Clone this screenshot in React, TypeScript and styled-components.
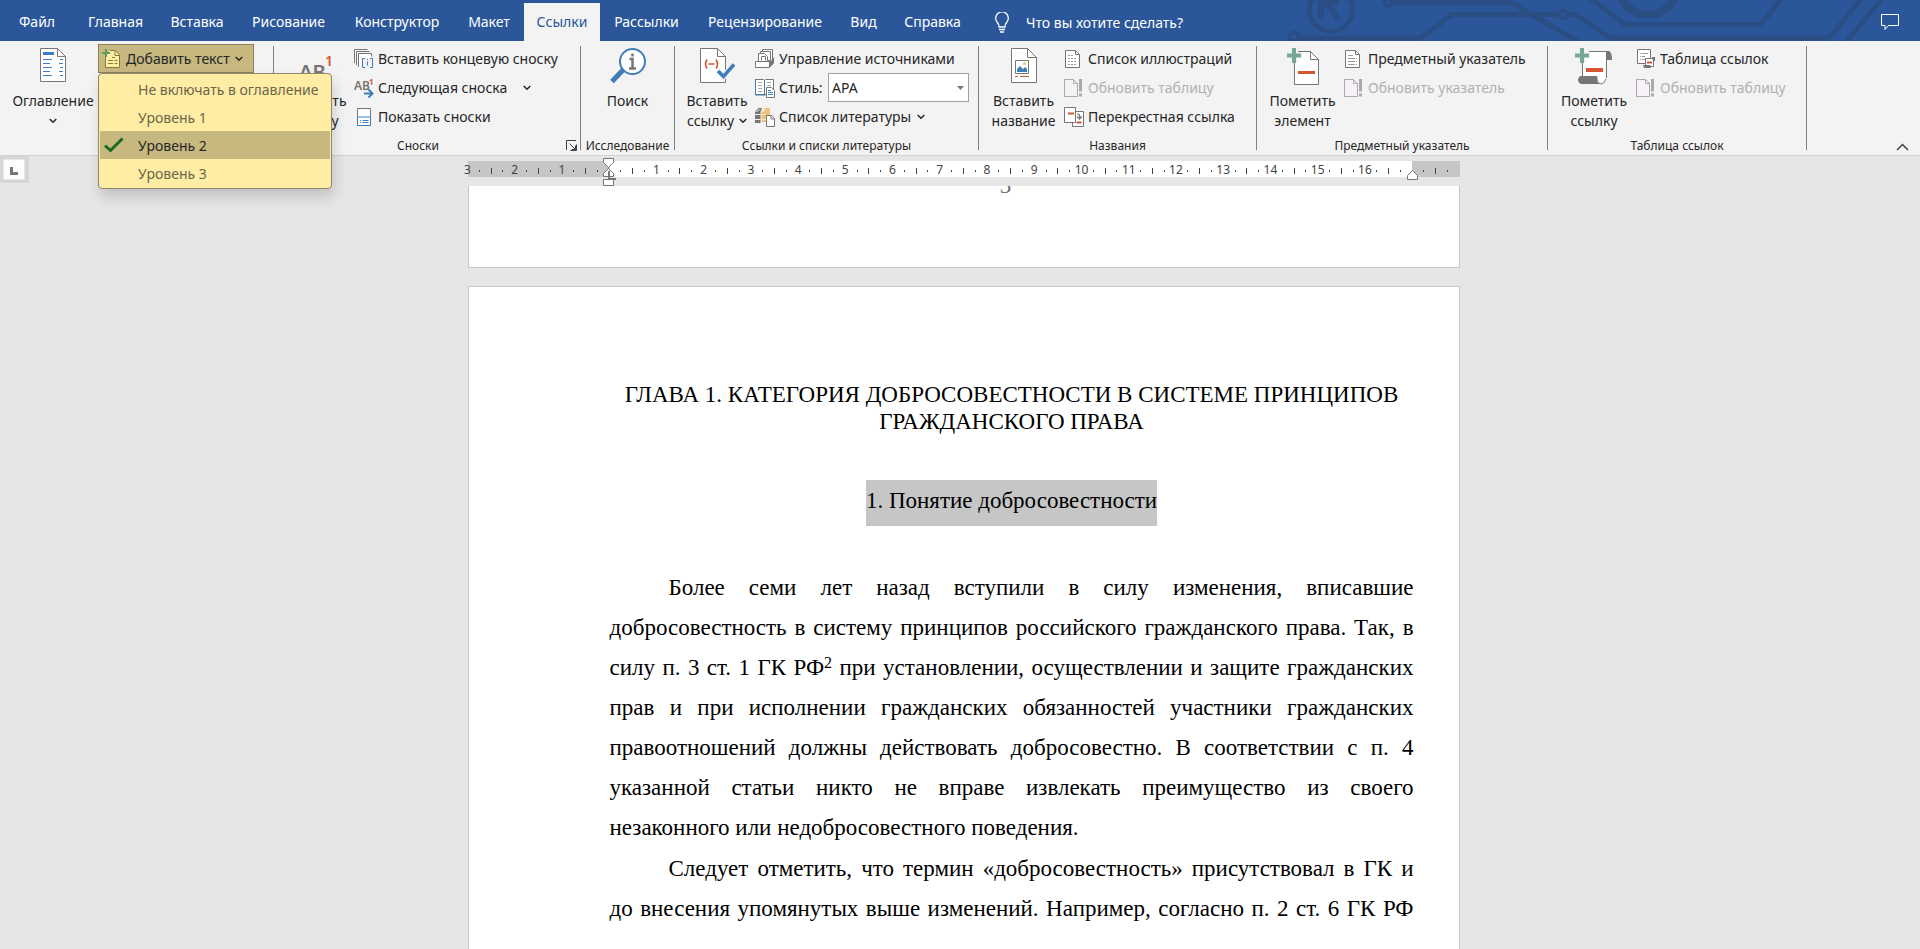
import React from 'react';
import styled, { createGlobalStyle, css } from 'styled-components';

const GlobalStyle = createGlobalStyle`
  *, *::before, *::after { box-sizing: border-box; }
  html, body { margin: 0; padding: 0; }
  body { background: #e6e6e6; color: #262626; overflow: hidden; }
  body, button, select { font-family: 'Noto Sans', 'Open Sans', sans-serif; font-size: 14px; }
  button { margin: 0; padding: 0; border: 0; background: none; color: inherit; cursor: pointer; }
  svg { display: block; flex: none; }
`;

const Window = styled.div`
  display: flex;
  flex-direction: column;
  height: 100vh;
`;

/* ---------- tab strip ---------- */

const TabStrip = styled.header`
  position: relative;
  display: flex;
  height: 41px;
  padding-top: 3px;
  background: #2b579a;
  flex: none;
`;

const Circuit = styled.svg`
  position: absolute;
  top: 0;
  right: 0;
`;

const Tabs = styled.nav`
  display: flex;
`;

const Tab = styled.button<{ $width: number; $active?: boolean }>`
  width: ${(p) => p.$width}px;
  height: 38px;
  line-height: 38px;
  white-space: nowrap;
  color: #fff;
  ${(p) => p.$active && css`
    background: #f3f3f3;
    color: #2b579a;
  `}
`;

const TellMe = styled.button`
  display: flex;
  align-items: center;
  gap: 16px;
  margin-left: 19px;
  color: #fff;
  white-space: nowrap;
`;

const CommentsButton = styled.button`
  position: relative;
  margin-left: auto;
  margin-right: 20px;
  color: #fff;
`;

/* ---------- ribbon ---------- */

const Ribbon = styled.section`
  display: flex;
  height: 115px;
  background: #f3f3f3;
  border-bottom: 1px solid #d2d2d2;
  flex: none;
`;

const Divider = styled.div`
  width: 1px;
  margin: 5px 0;
  background: #808080;
  flex: none;
`;

const Group = styled.div<{ $width: number }>`
  position: relative;
  display: flex;
  flex-direction: column;
  width: ${(p) => p.$width}px;
  padding-top: 3px;
  flex: none;
`;

const GroupBody = styled.div`
  display: flex;
  height: 87px;
`;

const GroupLabel = styled.div<{ $launcher?: boolean }>`
  display: flex;
  justify-content: center;
  height: 24px;
  padding-right: ${(p) => (p.$launcher ? 18 : 0)}px;
  line-height: 30px;
  font-size: 12px;
  white-space: nowrap;
`;

const Launcher = styled.button`
  position: absolute;
  right: 3px;
  bottom: 4px;
`;

const BigButton = styled.button<{ $width: number; $pad: number }>`
  display: flex;
  flex-direction: column;
  align-items: center;
  width: ${(p) => p.$width}px;
  padding-top: 4px;
  padding-left: ${(p) => p.$pad}px;
  line-height: 20px;
  white-space: nowrap;
  flex: none;
`;

const BigIcon = styled.span`
  display: flex;
  justify-content: center;
  height: 43px;
`;

const LabelLine = styled.span`
  display: flex;
  align-items: center;
  gap: 5px;
  height: 20px;
`;

const Rows = styled.div`
  display: flex;
  flex-direction: column;
`;

const Row = styled.button<{ $disabled?: boolean }>`
  display: flex;
  align-items: center;
  gap: 4px;
  height: 29px;
  white-space: nowrap;
  color: ${(p) => (p.$disabled ? '#b1b1b1' : '#262626')};
`;

const RowIcon = styled.span`
  display: flex;
  width: 20px;
  flex: none;
`;

const RowArrow = styled.span<{ $gap: number }>`
  margin-left: ${(p) => p.$gap}px;
`;

const StyleRow = styled.div`
  display: flex;
  align-items: center;
  gap: 4px;
  height: 29px;
`;

const StyleLabel = styled.label`
  width: 45px;
`;

const SelectBox = styled.div`
  display: grid;
  width: 141px;
  align-items: center;
  & > * { grid-area: 1 / 1; }
  & > svg { justify-self: end; margin-right: 5px; pointer-events: none; }
`;

const StyleSelect = styled.select`
  appearance: none;
  width: 100%;
  height: 29px;
  padding: 0 3px;
  border: 1px solid #a0a0a0;
  border-radius: 0;
  background: #fff;
  color: #262626;
`;

const AddText = styled.div`
  position: relative;
  width: 156px;
  height: 29px;
`;

const AddTextButton = styled.button`
  display: flex;
  align-items: center;
  gap: 5px;
  width: 100%;
  height: 29px;
  padding-left: 3px;
  border: 1px solid #8a8058;
  background: #c6b87f;
  white-space: nowrap;
`;

const Menu = styled.ul`
  position: absolute;
  z-index: 5;
  top: 29px;
  left: 0;
  width: 234px;
  margin: 0;
  padding: 1px;
  list-style: none;
  background: #ffeda3;
  border: 1px solid #8e8868;
  border-radius: 4px;
  box-shadow: 2px 8px 14px rgba(0, 0, 0, 0.16);
`;

const MenuItem = styled.button<{ $checked?: boolean }>`
  display: grid;
  grid-template-columns: 38px 1fr;
  align-items: center;
  width: 100%;
  height: 28px;
  text-align: left;
  white-space: nowrap;
  color: ${(p) => (p.$checked ? '#262626' : '#6b654c')};
  background: ${(p) => (p.$checked ? '#c6b87f' : 'transparent')};
`;

const CheckCell = styled.span`
  padding-left: 4px;
`;

const Collapse = styled.button`
  align-self: flex-end;
  margin: 0 11px 4px auto;
`;

/* ---------- document area ---------- */

const Workspace = styled.main`
  display: flex;
  flex: 1;
  min-height: 0;
  padding-right: 22px;
`;

const Corner = styled.div`
  width: 29px;
  height: 27px;
  padding: 3px;
  background: #d6d6d6;
  flex: none;
`;

const TabKind = styled.button`
  display: flex;
  align-items: flex-end;
  justify-content: center;
  width: 22px;
  height: 21px;
  padding-bottom: 4px;
  background: #fdfdfd;
  border: 1px solid #e6e6e6;
`;

const Canvas = styled.div`
  display: flex;
  flex-direction: column;
  align-items: center;
  flex: 1;
  min-width: 0;
`;

const Ruler = styled.div`
  position: relative;
  width: 992px;
  height: 16px;
  margin: 5px 0 9px;
  background: linear-gradient(to right, #c6c6c6 142px, #fff 142px, #fff 944px, #c6c6c6 944px);
  flex: none;
`;

const Marks = styled.div`
  display: grid;
  grid-template-columns: repeat(84, minmax(0, 1fr));
  margin: 0 6px 0 -6px;
  height: 16px;
  font-size: 12px;
  line-height: 18px;
  color: #444;
`;

const Mark = styled.span<{ $tall?: boolean; $dot?: boolean }>`
  display: flex;
  justify-content: center;
  align-items: center;
  ${(p) => (p.$tall || p.$dot) && css`
    &::before {
      content: '';
      width: 1px;
      height: ${p.$tall ? 6 : 2}px;
      margin-top: 2px;
      background: #444;
    }
  `}
`;

const IndentMarker = styled.svg<{ $left: number; $top: number }>`
  position: absolute;
  left: ${(p) => p.$left}px;
  top: ${(p) => p.$top}px;
`;

const Pages = styled.div`
  display: flex;
  flex-direction: column;
  gap: 18px;
  flex: 1;
  min-height: 0;
  overflow: hidden;
`;

const Sheet = styled.article`
  width: 992px;
  min-height: 1403px;
  background: #fff;
  border: 1px solid #c6c6c6;
  padding: 94px 45px 94px 141px;
  flex: none;
`;

const SheetEnd = styled(Sheet)`
  display: flex;
  flex-direction: column;
  justify-content: flex-end;
  height: 82px;
  min-height: 0;
  padding: 0 57px 68px 141px;
  border-top: 0;
  overflow: hidden;
`;

const Serif = css`
  margin: 0;
  font-family: 'Liberation Serif', 'Times New Roman', serif;
  font-size: 23px;
  font-weight: 400;
  color: #000;
`;

const PageNumber = styled.p`
  ${Serif}
  flex: none;
  line-height: 26px;
  text-align: center;
  color: #707070;
`;

const Chapter = styled.h1`
  ${Serif}
  line-height: 27px;
  text-align: center;
`;

const Section = styled.h2`
  ${Serif}
  width: fit-content;
  margin: 45px auto 42px;
  padding-bottom: 4px;
  line-height: 42px;
  background: #c6c6c6;
`;

const Paragraph = styled.p<{ $continues?: boolean }>`
  ${Serif}
  line-height: 40px;
  text-align: justify;
  text-indent: 59px;
  & + & { margin-top: 1px; }
  ${(p) => p.$continues && 'text-align-last: justify;'}
`;

const NoteRef = styled.sup`
  font-size: 16px;
  line-height: 0;
  vertical-align: 7px;
`;

/* ---------- drawings ---------- */

const GREY = '#767676';
const BLUE = '#3f7cba';
const RED = '#d65532';
const GREEN = '#74a892';

const Chevron = () => (
  <svg width="8" height="6" viewBox="0 0 8 6" fill="none" stroke="#262626" strokeWidth="1.5">
    <path d="M.7 1 4 4.3 7.3 1" />
  </svg>
);

const TocIcon = () => (
  <svg width="26" height="34" viewBox="0 0 26 34" fill="none">
    <path d="M.5.5h17l8 8v25H.5z" fill="#fff" stroke={GREY} />
    <path d="M17.5.5v8h8" stroke={GREY} />
    <path d="M3 4h11v3H3z" fill={BLUE} />
    <path d="M3 11.5h9M3 15.500h7M3 19.500h9M3 23.500h7M3 27.500h9M20 11.500h3M19 15.500h4M20 19.500h3M19 23.500h4M20 27.500h3" stroke={BLUE} />
  </svg>
);

const AddTextIcon = () => (
  <svg width="19" height="20" viewBox="0 0 19 20" fill="none">
    <path d="M3.500 5V18.500h14V6l-4-4.500H8" fill="#ffeda3" stroke="#8a7a3a" />
    <path d="M13 1.500V6.500h5" stroke="#8a7a3a" />
    <path d="M10 8.500h3M6 11.500h5M12.500 11.500h3M6 14.500h5M12.500 14.500h3" stroke="#8a7a3a" />
    <path d="M4 0v8M0 4h8" stroke="#5f9b62" strokeWidth="2" />
  </svg>
);

const CheckIcon = () => (
  <svg width="20" height="16" viewBox="0 0 20 16" fill="none" stroke="#1c6b24" strokeWidth="3">
    <path d="M1 8.500 6.500 13.500 18.500 1.500" />
  </svg>
);

const FootnoteIcon = () => (
  <svg width="34" height="34" viewBox="0 0 34 34">
    <text x="0" y="31" fontFamily="Noto Sans" fontWeight="600" fontSize="20" fill={GREY}>AB</text>
    <text x="26" y="18" fontFamily="Noto Sans" fontWeight="600" fontSize="14" fill={RED}>1</text>
  </svg>
);

const EndnoteIcon = () => (
  <svg width="20" height="20" viewBox="0 0 20 20" fill="none" stroke={GREY}>
    <path d="M.500 14V.500h13M2.500 16V2.500h13M4.500 18V4.500h13v3" />
    <path d="M5 5h12v4H7v9H5z" fill="#fff" stroke="none" />
    <path d="M11 9.500H8.500v9H11M16 9.500h2.500v9H16M13.500 12.500v4M13.500 10v1" stroke={BLUE} />
  </svg>
);

const NextNoteIcon = () => (
  <svg width="20" height="20" viewBox="0 0 20 20" fill="none">
    <text x="0" y="12" fontFamily="Noto Sans" fontWeight="600" fontSize="12" fill={GREY}>AB</text>
    <text x="15" y="7" fontFamily="Noto Sans" fontWeight="700" fontSize="8" fill={RED}>1</text>
    <path d="M10 15.500h8M14.500 11.500l4 4-4 4" stroke={BLUE} strokeWidth="2" />
  </svg>
);

const ShowNotesIcon = () => (
  <svg width="20" height="18" viewBox="0 0 20 18" fill="none">
    <path d="M3.500.500h13v17h-13z" fill="#fff" stroke={GREY} />
    <path d="M3.500 9V17.500h13V9zM6 12.500h1M8.500 12.500h6M6 14.500h1M8.500 14.500h6" stroke={BLUE} />
  </svg>
);

const SearchIcon = () => (
  <svg width="36" height="36" viewBox="0 0 36 36" fill="none">
    <path d="M13 22 2 33.500" stroke={BLUE} strokeWidth="5" />
    <circle cx="22.500" cy="13.500" r="12.500" fill="#fff" stroke={BLUE} strokeWidth="2" />
    <path d="M22.500 5.500v3M19.500 11h3v9.500M19 20.500h7" stroke={GREY} strokeWidth="2.500" />
  </svg>
);

const CitationIcon = () => (
  <svg width="35" height="35" viewBox="0 0 35 35" fill="none">
    <path d="M.500.500h17l8 8v26H.500z" fill="#fff" stroke={GREY} />
    <path d="M17.500.500v8h8" stroke={GREY} />
    <path d="M7 11.500q-3 5 0 9M16 11.500q3 5 0 9M8.500 16h6" stroke={RED} strokeWidth="1.600" />
    <path d="M18 23l5.500 5.500L34 16.500" stroke="#f3f3f3" strokeWidth="6" />
    <path d="M18 23l5.500 5.500L34 16.500" stroke={BLUE} strokeWidth="3.500" />
  </svg>
);

const SourcesIcon = () => (
  <svg width="20" height="19" viewBox="0 0 20 19" fill="none" stroke={GREY}>
    <path d="M7.500 2V.500h10v12H15M5.500 4V2.500h10v9h-3" fill="#fff" />
    <path d="M3.500 12V4.500h6l3 3V12" fill="#fff" />
    <path d="M6.500 11.500v-4h4v4" />
    <path d="M.500 12.500h14v6H.500z" fill="#fff" />
    <path d="M15 13l4-5v6l-4 4.500z" fill={GREY} stroke="none" />
  </svg>
);

const StyleIcon = () => (
  <svg width="20" height="20" viewBox="0 0 20 20" fill="none">
    <path d="M.500 1.500h8l1 1 1-1h8v15H.500z" fill="#fff" stroke={GREY} />
    <path d="M.500 1v16h10M9.500 2v14" stroke={BLUE} />
    <path d="M3 4.500h4M3 7.500h4M3 10.500h4M3 13.500h4M12 4.500h4M12 7.500h4" stroke="#a5a5a5" />
    <path d="M11.500 9.500h5l3 3v7h-8z" fill="#fff" stroke={GREY} />
    <path d="M13 12.500h3M13 14.500h5M13 16.500h5" stroke={BLUE} />
  </svg>
);

const BooksIcon = () => (
  <svg width="20" height="20" viewBox="0 0 20 20" fill="none">
    <path d="M0 5 3.500 1H7L5.500 5v11H0z" fill={GREY} />
    <path d="M1.500 5 4.500 2" stroke="#fff" />
    <path d="M0 7.500h5.500M0 12.500h5.500" stroke="#f3f3f3" />
    <path d="M6.500 5 10 1h5v14H6.500z" fill="#eac27a" />
    <path d="M8 5l3-3" stroke="#fff" />
    <path d="M6.500 7.500h4.500M6.500 12.500h4.500" stroke="#f9e6c2" />
    <path d="M11.500 8.500h5l3 3v8h-8z" fill="#fff" stroke={GREY} />
    <path d="M16 8.500v3.500h3.500" stroke={GREY} />
  </svg>
);

const CaptionIcon = () => (
  <svg width="26" height="35" viewBox="0 0 26 35" fill="none">
    <path d="M.500.500h16l9 9v25H.500z" fill="#fff" stroke={GREY} />
    <path d="M16.500.500v9h9" stroke={GREY} />
    <path d="M4.500 12.500h13v13h-13z" stroke={GREY} />
    <path d="M6 24v-3l3-3 3 3 2-2 2 2v3z" fill={BLUE} />
    <circle cx="13.500" cy="15.500" r="1.500" fill="#eac27a" />
    <path d="M4 28.500h3M9 28.500h9" stroke={RED} />
  </svg>
);

const ListIcon = ({ dashed }: { dashed?: boolean }) => (
  <svg width="18" height="18" viewBox="0 0 18 18" fill="none">
    <path d="M1.500.500h10l4 4v13h-14z" fill="#fff" stroke={GREY} />
    <path d="M11.500.500v4h4" stroke={GREY} />
    <path
      d="M4 5.500h5M4 8.500h9M4 11.500h9M4 14.500h9"
      stroke="#9a9a9a"
      strokeDasharray={dashed ? '2 1' : '7 1'}
    />
  </svg>
);

const UpdateIcon = () => (
  <svg width="20" height="18" viewBox="0 0 20 18" fill="none">
    <path d="M.500.500h9l4 4v13H.500z" fill="#f7f2f8" stroke="#aaa" />
    <path d="M9.500.500v4h4" stroke="#aaa" />
    <path d="M16.500 0v12.500M16.500 14.500v3" stroke="#aaa" strokeWidth="3" />
  </svg>
);

const CrossRefIcon = () => (
  <svg width="20" height="20" viewBox="0 0 20 20" fill="none">
    <path d="M8.500 4.500h11v15h-11z" fill="#fff" stroke={GREY} />
    <path d="M.500.500h11v15H.500z" fill="#fff" stroke={GREY} />
    <path d="M4 6.500h6M12.500 15.500h5" stroke={RED} strokeWidth="2" />
    <path d="M13.500 7q3 0 2 5M13 9.500l2.500 2.500 2.500-2.500" stroke={GREY} strokeWidth="1.300" />
  </svg>
);

const MarkEntryIcon = () => (
  <svg width="32" height="38" viewBox="0 0 32 38" fill="none">
    <path d="M7.500 3.500h16l8 8v25h-24z" fill="#fff" stroke={GREY} />
    <path d="M23.500 3.500v8h8" stroke={GREY} />
    <path d="M6 0h5v4h4v6h-4v5H5z" fill="#f3f3f3" />
    <path d="M7 0v15M0 7.500h14" stroke={GREEN} strokeWidth="4" />
    <path d="M11 24.500h17" stroke={RED} strokeWidth="3" />
  </svg>
);

const MarkCitationIcon = () => (
  <svg width="38" height="38" viewBox="0 0 38 38" fill="none">
    <path d="M7.500 3.500h23v30h-23z" fill="#fff" />
    <path d="M7.500 14v14M14 3.500h18M31.500 9v21" stroke={GREY} />
    <path d="M31 3h3q3 1 3 9h-6z" fill={GREY} />
    <path d="M5 28h17v4q0 3 4 4H6q-3-1-3-5z" fill={GREY} />
    <path d="M22 29v3q1 4 4 4t5-5" fill="#fff" stroke={GREY} />
    <path d="M5 0h6v4h4v6h-4v5H5z" fill="#f3f3f3" />
    <path d="M7 0v15M0 7.500h14" stroke={GREEN} strokeWidth="4" />
    <path d="M11 22h17" stroke={RED} strokeWidth="4" />
  </svg>
);

const AuthoritiesIcon = () => (
  <svg width="20" height="20" viewBox="0 0 20 20" fill="none">
    <path d="M1.500.500h13v14h-13z" fill="#fff" stroke={GREY} />
    <path d="M4 4.500h1M6 4.500h6M4 7.500h1M6 7.500h3M4 10.500h1M6 10.500h3" stroke="#9a9a9a" />
    <path d="M9.500 9.500h8v8h-8z" fill="#fff" stroke={GREY} />
    <path d="M16 8h3v4h-2zM7 16h7l1 3H8z" fill={GREY} />
    <path d="M11 13.500h5" stroke={RED} strokeWidth="2" />
  </svg>
);

const LauncherIcon = () => (
  <svg width="11" height="11" viewBox="0 0 11 11" fill="none" stroke="#404040">
    <path d="M.500 10V.500H10M3.500 3.500l6 6M10.500 4.500v6h-6M9.500 5.500v4h-4" />
  </svg>
);

const BulbIcon = () => (
  <svg width="16" height="21" viewBox="0 0 16 21" fill="none" stroke="#fff" strokeWidth="1.300">
    <path d="M5 15q0-3-2-5a6.300 6.300 0 1 1 10 0q-2 2-2 5zM5 17.500h6M6 20h4" />
  </svg>
);

const CommentIcon = () => (
  <svg width="19" height="17" viewBox="0 0 19 17" fill="none" stroke="#fff">
    <path d="M.500.500h17v11h-10l-3.500 4v-4H.500z" />
  </svg>
);

const CircuitArt = () => (
  <Circuit width="640" height="41" viewBox="1280 0 640 41" fill="none" stroke="#2a4d83" strokeWidth="5" aria-hidden="true">
    <circle cx="1331" cy="10" r="21.500" />
    <path d="M1321 0v19M1321 2h18M1324 0l15 19" strokeWidth="6" />
    <circle cx="1294" cy="37" r="4.500" strokeWidth="4" />
    <path d="M1299 38h122l31-23.500h106" />
    <circle cx="1563" cy="14.500" r="4" strokeWidth="4" />
    <path d="M1568 14.500h8l34 23.500h219l33-40" />
    <circle cx="1388" cy="2.500" r="4" strokeWidth="4" />
    <path d="M1393 2.500h117q8 2 14 8l58 33M1590-2l35 26.500h136l21-26.500M1845 43l38-45" />
    <circle cx="1648" cy="-14" r="29" strokeWidth="8" />
  </Circuit>
);

/* ---------- parts ---------- */

const TABS: [string, number][] = [
  ['Файл', 74], ['Главная', 83], ['Вставка', 80], ['Рисование', 103], ['Конструктор', 114],
  ['Макет', 70], ['Ссылки', 76], ['Рассылки', 93], ['Рецензирование', 144], ['Вид', 53], ['Справка', 85],
];

const LEVELS = ['Не включать в оглавление', 'Уровень 1', 'Уровень 2', 'Уровень 3'];

type BigProps = { width: number; pad?: number; icon: React.ReactNode; lines: string[]; arrow?: boolean };

const Big = ({ width, pad = 4, icon, lines, arrow }: BigProps) => (
  <BigButton $width={width} $pad={pad}>
    <BigIcon>{icon}</BigIcon>
    {lines.map((line, i) => (
      <LabelLine key={i}>
        {line}
        {arrow && i === lines.length - 1 && <Chevron />}
      </LabelLine>
    ))}
  </BigButton>
);

type SmallProps = { icon: React.ReactNode; text: string; disabled?: boolean; arrowGap?: number };

const Small = ({ icon, text, disabled, arrowGap }: SmallProps) => (
  <Row $disabled={disabled} disabled={disabled}>
    <RowIcon>{icon}</RowIcon>
    {text}
    {arrowGap !== undefined && <RowArrow $gap={arrowGap}><Chevron /></RowArrow>}
  </Row>
);

const rulerMarks = Array.from({ length: 84 }, (_, k) => {
  const cm = Math.abs(k - 12) / 4;
  if (k === 12 || k === 80) return <Mark key={k} />;
  if (k % 4 === 0) return <Mark key={k}>{cm}</Mark>;
  return <Mark key={k} $tall={k % 4 === 2} $dot={k % 2 === 1} />;
});

export default function App() {
  return (
    <Window>
      <GlobalStyle />
      <TabStrip>
        <CircuitArt />
        <Tabs>
          {TABS.map(([name, width]) => (
            <Tab key={name} $width={width} $active={name === 'Ссылки'}>{name}</Tab>
          ))}
        </Tabs>
        <TellMe><BulbIcon />Что вы хотите сделать?</TellMe>
        <CommentsButton aria-label="Примечания"><CommentIcon /></CommentsButton>
      </TabStrip>

      <Ribbon>
        <Group $width={273}>
          <GroupBody>
            <Big width={98} pad={8} icon={<TocIcon />} lines={['Оглавление', '']} arrow />
            <AddText>
              <AddTextButton aria-expanded="true">
                <AddTextIcon />Добавить текст<Chevron />
              </AddTextButton>
              <Menu>
                {LEVELS.map((level) => (
                  <li key={level}>
                    <MenuItem $checked={level === 'Уровень 2'}>
                      <CheckCell>{level === 'Уровень 2' && <CheckIcon />}</CheckCell>
                      {level}
                    </MenuItem>
                  </li>
                ))}
              </Menu>
            </AddText>
          </GroupBody>
        </Group>
        <Divider />
        <Group $width={306}>
          <GroupBody>
            <Big width={80} icon={<FootnoteIcon />} lines={['Вставить', 'сноску']} />
            <Rows>
              <Small icon={<EndnoteIcon />} text="Вставить концевую сноску" />
              <Small icon={<NextNoteIcon />} text="Следующая сноска" arrowGap={12} />
              <Small icon={<ShowNotesIcon />} text="Показать сноски" />
            </Rows>
          </GroupBody>
          <GroupLabel $launcher>Сноски</GroupLabel>
          <Launcher aria-label="Параметры сносок"><LauncherIcon /></Launcher>
        </Group>
        <Divider />
        <Group $width={93}>
          <GroupBody>
            <Big width={93} pad={0} icon={<SearchIcon />} lines={['Поиск']} />
          </GroupBody>
          <GroupLabel>Исследование</GroupLabel>
        </Group>
        <Divider />
        <Group $width={303}>
          <GroupBody>
            <Big width={80} icon={<CitationIcon />} lines={['Вставить', 'ссылку']} arrow />
            <Rows>
              <Small icon={<SourcesIcon />} text="Управление источниками" />
              <StyleRow>
                <RowIcon><StyleIcon /></RowIcon>
                <StyleLabel htmlFor="citation-style">Стиль:</StyleLabel>
                <SelectBox>
                  <StyleSelect id="citation-style" defaultValue="APA">
                    <option>APA</option>
                  </StyleSelect>
                  <svg width="7" height="4" viewBox="0 0 7 4"><path d="M0 0h7L3.500 4z" fill={GREY} /></svg>
                </SelectBox>
              </StyleRow>
              <Small icon={<BooksIcon />} text="Список литературы" arrowGap={2} />
            </Rows>
          </GroupBody>
          <GroupLabel>Ссылки и списки литературы</GroupLabel>
        </Group>
        <Divider />
        <Group $width={277}>
          <GroupBody>
            <Big width={85} icon={<CaptionIcon />} lines={['Вставить', 'название']} />
            <Rows>
              <Small icon={<ListIcon dashed />} text="Список иллюстраций" />
              <Small icon={<UpdateIcon />} text="Обновить таблицу" disabled />
              <Small icon={<CrossRefIcon />} text="Перекрестная ссылка" />
            </Rows>
          </GroupBody>
          <GroupLabel>Названия</GroupLabel>
        </Group>
        <Divider />
        <Group $width={290}>
          <GroupBody>
            <Big width={87} icon={<MarkEntryIcon />} lines={['Пометить', 'элемент']} />
            <Rows>
              <Small icon={<ListIcon />} text="Предметный указатель" />
              <Small icon={<UpdateIcon />} text="Обновить указатель" disabled />
            </Rows>
          </GroupBody>
          <GroupLabel>Предметный указатель</GroupLabel>
        </Group>
        <Divider />
        <Group $width={258}>
          <GroupBody>
            <Big width={88} icon={<MarkCitationIcon />} lines={['Пометить', 'ссылку']} />
            <Rows>
              <Small icon={<AuthoritiesIcon />} text="Таблица ссылок" />
              <Small icon={<UpdateIcon />} text="Обновить таблицу" disabled />
            </Rows>
          </GroupBody>
          <GroupLabel>Таблица ссылок</GroupLabel>
        </Group>
        <Divider />
        <Collapse aria-label="Свернуть ленту">
          <svg width="13" height="8" viewBox="0 0 13 8" fill="none" stroke="#404040" strokeWidth="1.500">
            <path d="M1 7l5.500-5.500L12 7" />
          </svg>
        </Collapse>
      </Ribbon>

      <Workspace>
        <Corner>
          <TabKind aria-label="Вид табуляции">
            <svg width="8" height="8" viewBox="0 0 8 8"><path d="M0 0h3v5h5v3H0z" fill={GREY} /></svg>
          </TabKind>
        </Corner>
        <Canvas>
          <Ruler>
            <Marks>{rulerMarks}</Marks>
            <IndentMarker $left={135} $top={-3} width="14" height="28" viewBox="0 0 14 28" fill="#fff" stroke={GREY}>
              <path d="M.500.500h10v4l-5 5-5-5z" />
              <path d="M.500 18.500v-3l5-5 5 5v3z" />
              <path d="M.500 21.500h10v6h-10z" />
              <path d="M6 13v8h7" fill="none" strokeWidth="2" />
            </IndentMarker>
            <IndentMarker $left={939} $top={9} width="11" height="10" viewBox="0 0 11 10" fill="#fff" stroke={GREY}>
              <path d="M.500 9.500v-4l5-5 5 5v4z" />
            </IndentMarker>
          </Ruler>
          <Pages>
            <SheetEnd><PageNumber>3</PageNumber></SheetEnd>
            <Sheet>
              <Chapter>ГЛАВА 1. КАТЕГОРИЯ ДОБРОСОВЕСТНОСТИ В СИСТЕМЕ ПРИНЦИПОВ ГРАЖДАНСКОГО ПРАВА</Chapter>
              <Section>1. Понятие добросовестности</Section>
              <Paragraph>
                Более семи лет назад вступили в силу изменения, вписавшие добросовестность в систему
                принципов российского гражданского права. Так, в силу п. 3 ст. 1 ГК РФ<NoteRef>2</NoteRef> при
                установлении, осуществлении и защите гражданских прав и при исполнении гражданских обязанностей
                участники гражданских правоотношений должны действовать добросовестно. В соответствии с п. 4
                указанной статьи никто не вправе извлекать преимущество из своего незаконного&nbsp;или
                недобросовестного поведения.
              </Paragraph>
              <Paragraph $continues>
                Следует отметить, что термин «добросовестность» присутствовал в ГК и до внесения упомянутых
                выше изменений. Например, согласно п. 2 ст. 6 ГК РФ
              </Paragraph>
            </Sheet>
          </Pages>
        </Canvas>
      </Workspace>
    </Window>
  );
}
